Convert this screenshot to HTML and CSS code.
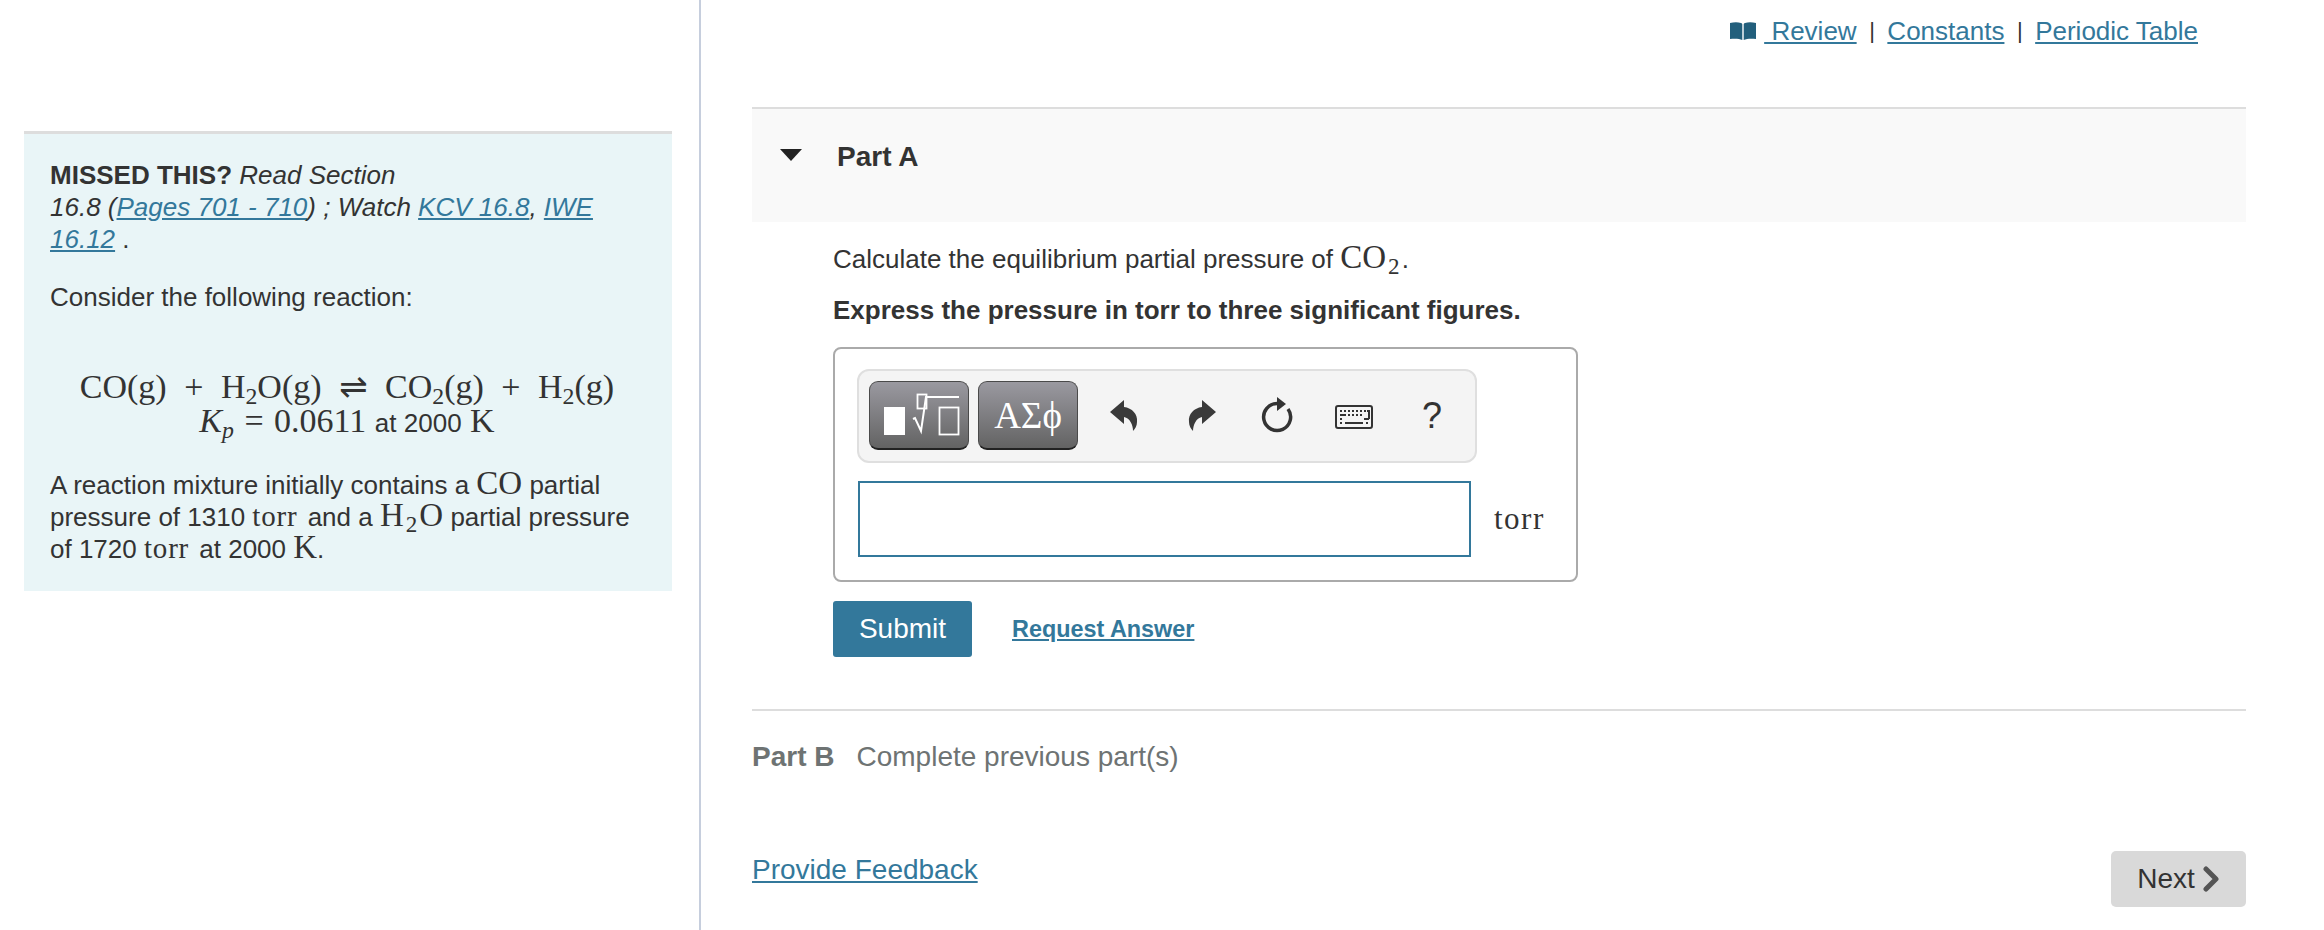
FILE: index.html
```html
<!DOCTYPE html>
<html lang="en">
<head>
    <meta charset="UTF-8">
    <meta name="viewport" content="width=device-width, initial-scale=1.0">
    <title>Part A</title>
    <link rel="stylesheet" href="styles.css">
</head>
<body>

    <div class="page">

        <aside class="side">
            <div class="intro">
                <p class="missed"><b>MISSED THIS?</b> <i>Read Section<br>16.8 (<a href="#">Pages 701 - 710</a>) ; Watch <a href="#">KCV 16.8</a>, <a href="#">IWE 16.12</a></i> .</p>
                <p class="consider">Consider the following reaction:</p>
                <div class="equation">
                    <div>CO(g) <span class="op">+</span> H<sub>2</sub>O(g) <span class="equil">⇌</span> CO<sub>2</sub>(g) <span class="op">+</span> H<sub>2</sub>(g)</div>
                    <div><i>K<sub>p</sub></i> <span class="eq">=</span> 0.0611 <span class="plain">at 2000</span> K</div>
                </div>
                <p class="mixture">A reaction mixture initially contains a <span class="math">CO</span> partial pressure of 1310 <span class="math-sm">torr</span> and a <span class="math">H<sub>2</sub>O</span> partial pressure of 1720 <span class="math-sm">torr</span> at 2000 <span class="math">K</span>.</p>
            </div>
        </aside>

        <main class="content">

            <nav class="top-links">
                <svg class="book" width="28" height="20" viewBox="0 0 28 20">
                    <path d="M1 2c4-1 8-1 11 0 .8.3 1.300.8 1.300 1.600V19c-3-1.500-8-1.500-12.300-1z" fill="#225f7c"/>
                    <path d="M27 2c-4-1-8-1-11 0-.8.3-1.300.8-1.300 1.600V19c3-1.500 8-1.500 12.300-1z" fill="#225f7c"/>
                </svg>
                <a href="#">&nbsp;Review</a>
                <span class="sep">|</span>
                <a href="#">Constants</a>
                <span class="sep">|</span>
                <a href="#">Periodic Table</a>
            </nav>

            <section class="part-head">
                <span class="caret"></span>
                <h2>Part A</h2>
            </section>

            <section class="part-body">
                <p class="ask">Calculate the equilibrium partial pressure of <span class="math">CO<sub>2</sub></span>.</p>
                <p class="express">Express the pressure in torr to three significant figures.</p>

                <div class="answer-box">
                    <div class="toolbar">
                        <button class="tpl-btn">
                            <svg width="98" height="66" viewBox="0 0 98 66">
                                <rect x="14" y="25" width="21" height="28" fill="#fff"/>
                                <rect x="47.500" y="12.500" width="9" height="14" fill="none" stroke="#fff" stroke-width="1.800"/>
                                <path d="M43 37l2-1 6 13 5-34h33" fill="none" stroke="#fff" stroke-width="2"/>
                                <rect x="69.500" y="25.500" width="19" height="27" fill="none" stroke="#fff" stroke-width="1.800"/>
                            </svg>
                        </button>
                        <button class="tpl-btn greek">ΑΣϕ</button>
                        <span class="tool tool-undo">
                            <svg width="28" height="32" viewBox="0 0 28 32"><path d="M0 12L14 0V7C22 8 28 14 27 22C27 26 25 29 23 31C23 25 20 18 14 17V24Z" fill="#3a3a3a"/></svg>
                        </span>
                        <span class="tool tool-redo">
                            <svg width="28" height="32" viewBox="0 0 28 32"><path d="M28 12L14 0V7C6 8 0 14 1 22C1 26 3 29 5 31C5 25 8 18 14 17V24Z" fill="#3a3a3a"/></svg>
                        </span>
                        <span class="tool tool-reset">
                            <svg width="32" height="37" viewBox="0 0 32 37">
                                <path d="M16 6.500A13.500 13.500 0 1 0 27 12" fill="none" stroke="#333" stroke-width="3.500"/>
                                <path d="M16 0l9 7-9 7z" fill="#333"/>
                            </svg>
                        </span>
                        <span class="tool tool-keys">
                            <svg width="38" height="24" viewBox="0 0 38 24">
                                <rect x="1" y="1" width="36" height="22" rx="2" fill="none" stroke="#333" stroke-width="2"/>
                                <path d="M5 6h2M9 6h2M13 6h2M17 6h2M21 6h2M25 6h2M29 6h2M32 6h2V14M5 10h6M13 10h2M17 10h2M21 10h2M25 10h2M29 14h5M5 14h2M5 18h2M10 18h18M31 18h2" stroke="#333" stroke-width="2" fill="none"/>
                            </svg>
                        </span>
                        <span class="tool tool-help">?</span>
                    </div>
                    <div class="answer-row">
                        <input class="answer-input" type="text" aria-label="Answer">
                        <span class="unit">torr</span>
                    </div>
                </div>

                <div class="actions">
                    <button class="submit">Submit</button>
                    <a class="request" href="#">Request Answer</a>
                </div>
            </section>

            <section class="part-b">
                <b>Part B</b><span>Complete previous part(s)</span>
            </section>

            <footer class="bottom">
                <a href="#">Provide Feedback</a>
                <button class="next">Next
                    <svg width="18" height="26" viewBox="0 0 18 26"><path d="M4 3l10 10L4 23" fill="none" stroke="#555" stroke-width="5" stroke-linecap="round" stroke-linejoin="round"/></svg>
                </button>
            </footer>

        </main>
    </div>

</body>
</html>
```

FILE: styles.css
```css
/* General Styling */
body {
    font-family: "Liberation Sans", Arial, sans-serif;
    font-size: 26px;
    line-height: 32px;
    color: #333333;
    background: #ffffff;
    margin: 0;
    overflow: hidden;
}

a {
    color: #33789b;
    text-decoration: underline;
}

p {
    margin: 0;
}

sub {
    font-size: 0.7em;
    line-height: 0;
    vertical-align: -0.25em;
}

.page {
    display: flex;
    height: 930px;
}

/* Left column */
.side {
    flex: none;
    width: 701px;
    height: 930px;
    box-sizing: border-box;
    border-right: 2px solid #c6cedd;
    padding-top: 131px;
}

.intro {
    margin-left: 24px;
    width: 648px;
    height: 460px;
    box-sizing: border-box;
    background: #e9f5f7;
    border-top: 3px solid #dddddd;
    padding: 25px 24px 0 26px;
}

.consider {
    margin-top: 26px;
}

.equation {
    margin-top: 57px;
    font-family: "Liberation Serif", serif;
    font-size: 34px;
    line-height: 34px;
    text-align: center;
    white-space: nowrap;
    padding-right: 4px;
}

.equation .op {
    margin: 0 9px;
}

.equation .eq {
    margin: 0 2px;
}

.equation .equil {
    font-family: "DejaVu Sans", sans-serif;
    font-size: 34px;
    line-height: 0;
    margin: 0 9px;
}

.equation .plain {
    font-family: "Liberation Sans", sans-serif;
    font-size: 26px;
}

.mixture {
    margin-top: 29px;
}

.math {
    font-family: "Liberation Serif", serif;
    font-size: 33px;
    line-height: 0;
}

.math sub {
    margin: 0 2px;
}

.math-sm {
    font-family: "Liberation Serif", serif;
    font-size: 29px;
    line-height: 0;
    letter-spacing: 0.800px;
    margin-right: 3px;
}

/* Right column */
.content {
    flex: 1;
    padding: 0 78px 0 51px;
    min-width: 0;
}

.top-links {
    display: flex;
    justify-content: flex-end;
    align-items: center;
    height: 62px;
    padding-right: 48px;
    box-sizing: border-box;
    gap: 12.500px;
}

.sep {
    font-size: 22px;
}

.book {
    margin-right: -5px;
}

.part-head {
    display: flex;
    align-items: flex-start;
    margin-top: 45px;
    height: 115px;
    box-sizing: border-box;
    background: #f9f9f9;
    border-top: 2px solid #dddddd;
    padding: 32px 0 0 28px;
}

.caret {
    width: 0;
    height: 0;
    border-left: 11px solid transparent;
    border-right: 11px solid transparent;
    border-top: 12px solid #222222;
    margin-top: 8px;
}

.part-head h2 {
    margin: 0 0 0 35px;
    font-size: 28px;
    line-height: 32px;
}

.part-body {
    padding-left: 81px;
}

.ask {
    margin-top: 21px;
}

.express {
    margin-top: 19px;
    font-weight: bold;
}

.answer-box {
    margin-top: 21px;
    width: 745px;
    height: 235px;
    box-sizing: border-box;
    border: 2px solid #aaaaaa;
    border-radius: 8px;
    padding: 20px 22px 0 22px;
}

.toolbar {
    display: flex;
    align-items: flex-start;
    width: 620px;
    height: 94px;
    box-sizing: border-box;
    background: #f4f4f4;
    border: 2px solid #dfdfdf;
    border-radius: 12px;
    padding: 10px 0 0 10px;
    gap: 9px;
}

.tpl-btn {
    width: 100px;
    height: 69px;
    padding: 0;
    box-sizing: border-box;
    border: 1px solid #4a4a4a;
    border-bottom: 2px solid #222222;
    border-radius: 9px;
    background: linear-gradient(#9a99a0, #636363);
    display: flex;
    align-items: center;
    justify-content: center;
}

.greek {
    color: #ffffff;
    font-family: "Liberation Serif", serif;
    font-size: 37px;
}

.tool {
    display: flex;
    justify-content: center;
    align-items: center;
    height: 69px;
    flex: none;
}

/* icon x positions measured from the toolbar */
.tool-undo {
    margin-left: 23px;
}

.tool-redo {
    margin-left: 41px;
}

.tool-reset {
    margin-left: 36px;
}

.tool-keys {
    margin-left: 33px;
    padding-top: 3px;
    box-sizing: border-box;
}

.tool-help {
    margin-left: 40px;
    font-size: 36px;
    color: #333333;
}

.answer-row {
    display: flex;
    align-items: center;
    margin-top: 18px;
}

.answer-input {
    width: 613px;
    height: 76px;
    box-sizing: border-box;
    border: 2px solid #33789b;
    background: #ffffff;
    margin: 0 0 0 1px;
    padding: 0;
}

.unit {
    margin-left: 23px;
    font-family: "Liberation Serif", serif;
    font-size: 31px;
    letter-spacing: 1.500px;
}

.actions {
    display: flex;
    align-items: center;
    margin-top: 19px;
}

.submit {
    width: 139px;
    height: 56px;
    background: #33789b;
    color: #ffffff;
    font-family: "Liberation Sans", sans-serif;
    font-size: 28px;
    border: none;
    border-radius: 3px;
    padding: 0;
}

.request {
    margin-left: 40px;
    font-size: 23.400px;
    font-weight: bold;
}

.part-b {
    margin-top: 52px;
    border-top: 2px solid #dddddd;
    padding-top: 30px;
    color: #6e7373;
    font-size: 28px;
}

.part-b span {
    margin-left: 22px;
}

.bottom {
    display: flex;
    justify-content: space-between;
    align-items: center;
    margin-top: 78px;
}

.bottom a {
    font-size: 28px;
    margin-bottom: 18px;
}

.next {
    width: 135px;
    height: 56px;
    background: #d9d9d9;
    color: #333333;
    font-family: "Liberation Sans", sans-serif;
    font-size: 28px;
    border: none;
    border-radius: 5px;
    padding: 0;
    display: flex;
    align-items: center;
    justify-content: center;
    gap: 7px;
}
```
